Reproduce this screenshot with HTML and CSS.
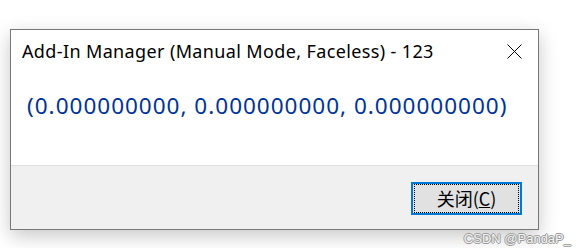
FILE: index.html
```html
<!DOCTYPE html>
<html lang="zh-CN">
<head>
  <meta charset="UTF-8" />
  <title>Add-In Manager</title>
  <link rel="stylesheet" href="styles.css">
</head>
<body>
  <div class="dialog">
    <div class="title-bar">
      <span class="title">Add-In Manager (Manual Mode, Faceless) - 123</span>
      <svg class="close-icon" width="15" height="15" viewBox="0 0 15 15">
        <path d="M0.5 0.5 L14.5 14.5 M14.5 0.5 L0.5 14.5" stroke="#000" stroke-width="1" fill="none"/>
      </svg>
    </div>
    <div class="content">
      <div class="instruction">(0.000000000, 0.000000000, 0.000000000)</div>
    </div>
    <div class="footer">
      <button class="close-button"><span class="focus-ring">关闭(<u>C</u>)</span></button>
    </div>
  </div>
  <div class="watermark">CSDN @PandaP_</div>
</body>
</html>
```

FILE: styles.css
```css
body {
  margin: 0;
  padding: 29px 0 0 10px;
  background: #fff;
  font-family: "Noto Sans", "Noto Sans CJK SC", sans-serif;
  position: relative;
  height: 248px;
  box-sizing: border-box;
  overflow: hidden;
}

.dialog {
  width: 527px;
  height: 199px;
  border: 1px solid #777;
  background: #fff;
  display: flex;
  flex-direction: column;
  box-shadow: 0 6px 18px rgba(0, 0, 0, 0.22);
}

.title-bar {
  height: 42px;
  display: flex;
  align-items: center;
  justify-content: space-between;
  padding: 0 16px 0 11px;
}

.title {
  font-size: 18px;
  letter-spacing: 0.37px;
  color: #000;
}

.close-icon {
  display: block;
}

.content {
  flex: 1;
  padding: 0 0 0 16px;
  border-bottom: 1px solid #dfdfdf;
}

.instruction {
  color: #003399;
  font-size: 22.5px;
  letter-spacing: 1px;
  line-height: 30px;
  margin-top: 19px;
}

.footer {
  height: 63px;
  background: #f0f0f0;
  display: flex;
  align-items: center;
  justify-content: flex-end;
  padding-right: 16px;
}

.close-button {
  width: 111px;
  height: 33px;
  margin-top: 1px;
  padding: 0;
  border: 2px solid #0078d7;
  background: #e1e1e1;
  font-family: "Noto Sans CJK SC", sans-serif;
  font-size: 18px;
  color: #000;
  box-sizing: border-box;
}

.focus-ring {
  display: flex;
  align-items: center;
  justify-content: center;
  height: 27px;
  margin: 0 1px;
  border: 1px dotted #000;
}

.focus-ring u {
  text-decoration-thickness: 1px;
}

.watermark {
  position: absolute;
  right: 5px;
  bottom: 2px;
  font-family: "Liberation Sans", sans-serif;
  font-size: 13px;
  color: #f4f4f4;
  text-shadow: 1px 0 0 #999, -1px 0 0 #999, 0 1px 0 #999, 0 -1px 0 #999;
}
```
